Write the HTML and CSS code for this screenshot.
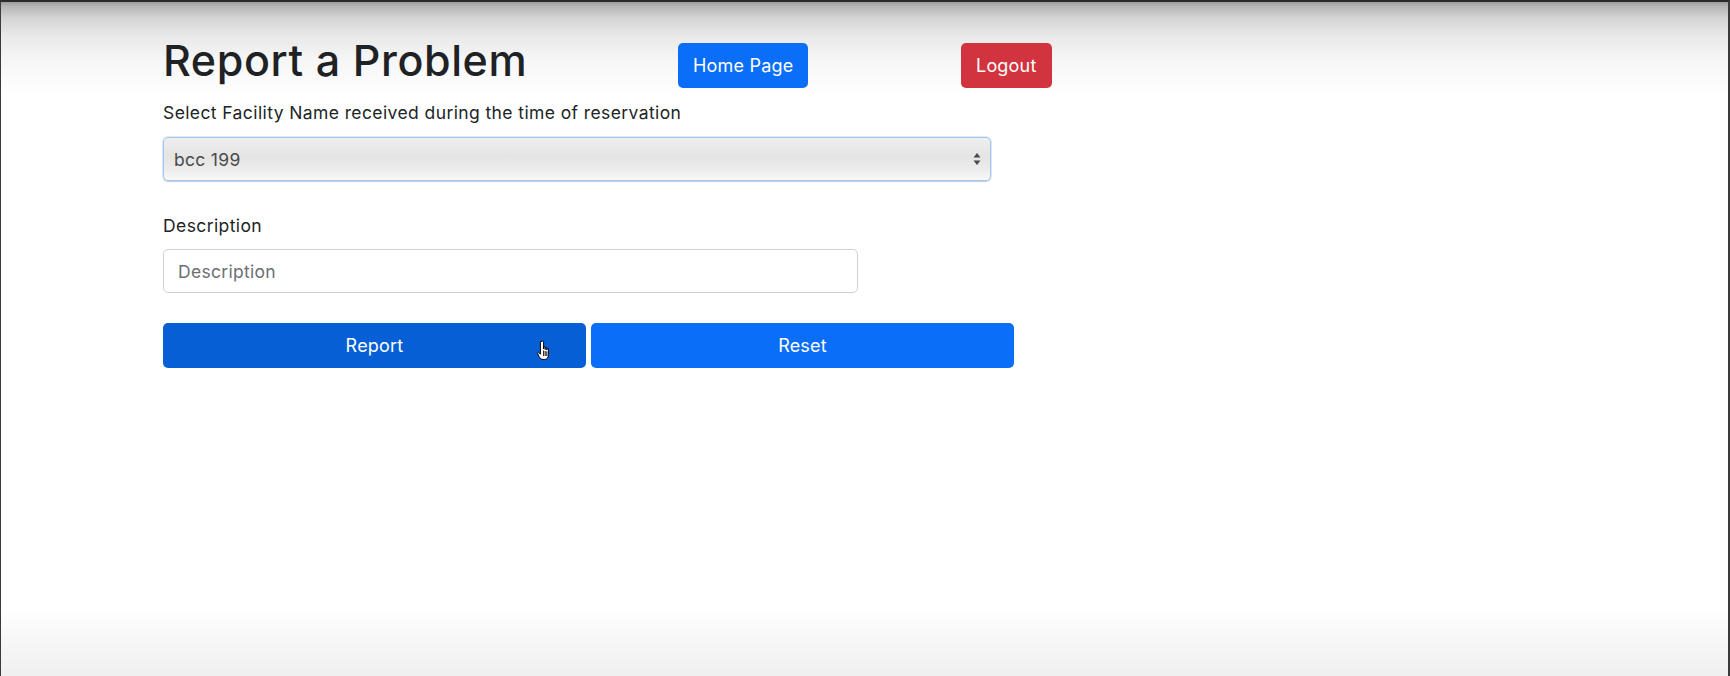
FILE: index.html
```html
<!DOCTYPE html>
<html lang="en">
<head>
<meta charset="utf-8">
<title>Report a Problem</title>
<link rel="stylesheet" href="styles.css">
</head>
<body>
<div class="page">
  <div class="header">
    <h1 class="title">Report a Problem</h1>
    <div class="header-cell"><button class="btn btn-primary btn-nav">Home Page</button></div>
    <div class="header-cell"><button class="btn btn-danger btn-nav">Logout</button></div>
  </div>
  <form class="form">
    <label class="label label-first">Select Facility Name received during the time of reservation</label>
    <div class="select-wrap">
      <select class="select"><option>bcc 199</option></select>
      <svg class="select-arrows" width="8" height="14" viewBox="0 0 8 14"><path d="M4 1 L7.5 5.5 H0.5 Z M4 13 L7.5 8.5 H0.5 Z" fill="#4a4a4a"/></svg>
    </div>
    <label class="label label-second">Description</label>
    <input class="input" type="text" placeholder="Description">
    <div class="actions">
      <button type="button" class="btn btn-primary btn-wide btn-hover">Report
        <svg class="cursor" width="18" height="22" viewBox="0 0 18 22"><path d="M5 1.5 C5 0.7 6.6 0.7 6.6 1.5 V9 V7.5 C6.6 6.7 8.2 6.7 8.2 7.5 V9.5 V8.3 C8.2 7.5 9.8 7.5 9.8 8.3 V10 V9 C9.8 8.2 11.4 8.2 11.4 9 V14.5 C11.4 17.5 10 19.5 7.5 19.5 H6 C4 19.5 3 18 2 16.5 L0.6 13.3 C0.2 12.4 1.4 11.8 2 12.5 L3.4 14.2 V1.5 Z" transform="translate(2 1)" fill="#fff" stroke="#000" stroke-width="1" stroke-linejoin="round"/><path d="M8.6 10.5 V16 M10.2 11 V16 M11.8 11.3 V16" transform="translate(0 1)" stroke="#000" stroke-width="0.9"/></svg>
      </button>
      <button type="reset" class="btn btn-primary btn-wide">Reset</button>
    </div>
  </form>
</div>
</body>
</html>
```
FILE: styles.css
```css
html, body {
  margin: 0;
  padding: 0;
  height: 100%;
}
body {
  width: 1730px;
  height: 676px;
  box-sizing: border-box;
  overflow: hidden;
  font-family: Inter, "Liberation Sans", sans-serif;
  color: #212529;
  border-left: 1px solid #3a3a3a;
  border-right: 2px solid #3a3a3a;
  border-top: 2px solid #2a2a2a;
  background: linear-gradient(to bottom,
    #8f8f8f 0px, #b4b4b4 6px, #d4d4d4 18px, #e9e9e9 36px, #f6f6f6 60px, #ffffff 95px,
    #ffffff 610px, #f9f9f9 630px, #f0f0f0 675px);
}
.page {
  padding: 34px 0 0 162px;
}
.header {
  display: grid;
  grid-template-columns: 515px 283px auto;
  align-items: start;
}
.title {
  margin: 0;
  font-size: 43px;
  font-weight: 500;
  line-height: 48px;
  letter-spacing: 0.6px;
  color: #1f2225;
}
.header-cell {
  padding-top: 7px;
}
.btn {
  font-family: Inter, "Liberation Sans", sans-serif;
  border: none;
  border-radius: 5px;
  color: #fff;
  cursor: pointer;
  letter-spacing: 0.2px;
}
.btn-nav {
  height: 45px;
  padding: 0 15px;
  font-size: 18px;
}
.btn-primary {
  background: #0b6ef8;
}
.btn-danger {
  background: #d2343f;
}
.form {
  display: flex;
  flex-direction: column;
  align-items: flex-start;
}
.label {
  font-size: 17.5px;
  line-height: 25px;
  letter-spacing: 0.4px;
  color: #212427;
}
.label-first {
  margin-top: 12px;
}
.label-second {
  margin-top: 32px;
}
.select-wrap {
  position: relative;
  margin-top: 12px;
  width: 828px;
  height: 44px;
}
.select {
  appearance: none;
  -webkit-appearance: none;
  width: 100%;
  height: 100%;
  box-sizing: border-box;
  border: 1px solid #a3c6f0;
  border-radius: 5px;
  padding: 0 10px;
  font-family: Inter, "Liberation Sans", sans-serif;
  font-size: 17.5px;
  letter-spacing: 0.3px;
  color: #4a4a4a;
  background: linear-gradient(to bottom, #efefef 0%, #e4e4e4 45%, #ececec 75%, #f8f8f8 100%);
  box-shadow: 0 1px 1px rgba(0,0,0,0.12), 0 0 0 1px rgba(120,170,235,0.25);
}
.select-arrows {
  position: absolute;
  right: 10px;
  top: 15px;
}
.input {
  margin-top: 11px;
  width: 695px;
  height: 44px;
  box-sizing: border-box;
  border: 1px solid #cfd2d5;
  border-radius: 5px;
  padding: 0 14px;
  font-family: Inter, "Liberation Sans", sans-serif;
  font-size: 17.5px;
  letter-spacing: 0.3px;
  color: #495057;
  background: #fff;
}
.input::placeholder {
  color: #6c6f73;
}
.actions {
  margin-top: 30px;
  display: flex;
  gap: 5px;
}
.btn-wide {
  position: relative;
  width: 423px;
  height: 45px;
  font-size: 18px;
}
.btn-hover {
  background: #075fd6;
}
.cursor {
  position: absolute;
  left: 372px;
  top: 16px;
}
```
